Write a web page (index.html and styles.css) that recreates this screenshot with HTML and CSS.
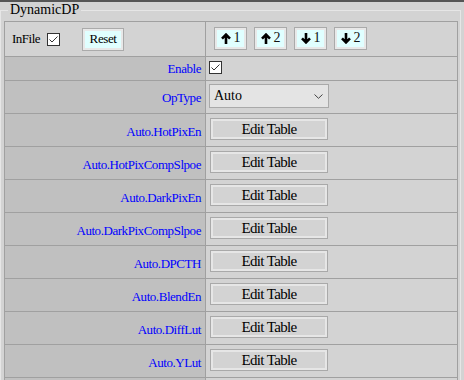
FILE: index.html
```html
<!DOCTYPE html>
<html>
<head>
<meta charset="utf-8">
<link rel="stylesheet" href="styles.css">
</head>
<body>
<fieldset class="panel">
  <legend class="panel-title">DynamicDP</legend>
  <div class="grid">
    <div class="cell head head-left">
      <span class="infile">InFile</span>
      <span class="check check-infile"><svg width="11" height="11" viewBox="0 0 11 11"><path d="M1.5 5.5 L4 8 L9.5 2.5" fill="none" stroke="#333" stroke-width="1"/></svg></span>
      <button class="cbtn reset">Reset</button>
    </div>
    <div class="cell head head-right">
      <button class="cbtn arrow"><svg width="10" height="11" viewBox="0 0 10 11"><path d="M1 5.6 L5 1.6 L9 5.6 M5 1.6 V11" fill="none" stroke="#000" stroke-width="2.6"/></svg><span class="num">1</span></button>
      <button class="cbtn arrow"><svg width="10" height="11" viewBox="0 0 10 11"><path d="M1 5.6 L5 1.6 L9 5.6 M5 1.6 V11" fill="none" stroke="#000" stroke-width="2.6"/></svg><span class="num">2</span></button>
      <button class="cbtn arrow"><svg width="10" height="11" viewBox="0 0 10 11"><path d="M1 5.4 L5 9.4 L9 5.4 M5 9.4 V0" fill="none" stroke="#000" stroke-width="2.6"/></svg><span class="num">1</span></button>
      <button class="cbtn arrow"><svg width="10" height="11" viewBox="0 0 10 11"><path d="M1 5.4 L5 9.4 L9 5.4 M5 9.4 V0" fill="none" stroke="#000" stroke-width="2.6"/></svg><span class="num">2</span></button>
    </div>

    <div class="cell label label-en">Enable</div>
    <div class="cell value value-en"><span class="check"><svg width="11" height="11" viewBox="0 0 11 11"><path d="M1.5 5.5 L4 8 L9.5 2.5" fill="none" stroke="#333" stroke-width="1"/></svg></span></div>

    <div class="cell label label-op">OpType</div>
    <div class="cell value value-op"><div class="select"><span>Auto</span><svg width="9" height="5" viewBox="0 0 9 5"><path d="M0.5 0.5 L4.5 4.3 L8.5 0.5" fill="none" stroke="#444" stroke-width="1"/></svg></div></div>

    <div class="cell label">Auto.HotPixEn</div>
    <div class="cell value"><button class="edit">Edit Table</button></div>

    <div class="cell label">Auto.HotPixCompSlpoe</div>
    <div class="cell value"><button class="edit">Edit Table</button></div>

    <div class="cell label">Auto.DarkPixEn</div>
    <div class="cell value"><button class="edit">Edit Table</button></div>

    <div class="cell label">Auto.DarkPixCompSlpoe</div>
    <div class="cell value"><button class="edit">Edit Table</button></div>

    <div class="cell label">Auto.DPCTH</div>
    <div class="cell value"><button class="edit">Edit Table</button></div>

    <div class="cell label">Auto.BlendEn</div>
    <div class="cell value"><button class="edit">Edit Table</button></div>

    <div class="cell label">Auto.DiffLut</div>
    <div class="cell value"><button class="edit">Edit Table</button></div>

    <div class="cell label">Auto.YLut</div>
    <div class="cell value"><button class="edit">Edit Table</button></div>

    <div class="cell label"></div>
    <div class="cell value"></div>
  </div>
</fieldset>
</body>
</html>
```

FILE: styles.css
```css
html {
  overflow: hidden;
}
body {
  margin: 0;
  border-top: 2px solid #555;
  background: #d3d3d3;
  font-family: "Liberation Serif", "Times New Roman", serif;
  color: #000;
}
.panel {
  margin: 0 3px 0 0;
  padding: 3px 2px 0 3px;
  border: 1px solid #e6e6e6;
  min-inline-size: 0;
}
.panel-title {
  margin-left: 4px;
  padding: 0 2px;
  font-size: 14px;
  line-height: 16px;
}
.grid {
  display: grid;
  grid-template-columns: 201px 252px;
  grid-template-rows: 35px 24px;
  grid-auto-rows: 33px;
  border-left: 1px solid #a0a0a0;
  border-top: 1px solid #a0a0a0;
}
.cell {
  box-sizing: border-box;
  border-right: 1px solid #a0a0a0;
  border-bottom: 1px solid #a0a0a0;
  display: flex;
  background: #d3d3d3;
}
.head {
  align-items: center;
}
.head-left {
  padding-left: 7px;
}
.infile {
  font-size: 13px;
  letter-spacing: -0.5px;
}
.check {
  box-sizing: border-box;
  width: 13px;
  height: 13px;
  border: 1px solid #333;
  background: #fff;
  display: block;
}
.check svg {
  display: block;
}
.check-infile {
  margin-left: 7px;
  margin-top: 1px;
}
.cbtn {
  box-sizing: border-box;
  border: 1px solid #aaa;
  box-shadow: inset 0 0 0 2px #e8e8e8;
  background: #e0ffff;
  font-family: "Liberation Serif", "Times New Roman", serif;
  padding: 0;
  margin: 0;
  display: flex;
  align-items: center;
  justify-content: center;
  color: #000;
}
.reset {
  margin-left: 22px;
  width: 42px;
  height: 23px;
  font-size: 13px;
  letter-spacing: -0.4px;
}
.head-right {
  padding-left: 8px;
  padding-bottom: 2px;
  gap: 7px;
}
.arrow {
  width: 33px;
  height: 23px;
  gap: 3px;
}
.arrow svg {
  display: block;
}
.num {
  font-size: 14px;
  line-height: 16px;
  color: #111;
}
.label {
  background: #c0c0c0;
  justify-content: flex-end;
  align-items: center;
  padding-right: 4px;
  padding-top: 4px;
  color: #0000ff;
  font-size: 13px;
  letter-spacing: -0.45px;
}
.label-en {
  padding-top: 1px;
}
.label-op {
  padding-top: 2px;
}
.value {
  align-items: flex-start;
  padding-left: 4px;
  padding-top: 4px;
}
.value-en {
  padding-left: 3px;
  padding-top: 4px;
}
.value-op {
  padding-left: 3px;
  padding-top: 3px;
}
.select {
  box-sizing: border-box;
  width: 120px;
  height: 24px;
  border: 1px solid #a9a9a9;
  background: #e4e4e4;
  display: flex;
  align-items: center;
  justify-content: space-between;
  padding: 0 5px 0 4px;
  font-size: 14px;
}
.select svg {
  display: block;
}
.edit {
  box-sizing: border-box;
  width: 118px;
  height: 22px;
  border: 1px solid #a9a9a9;
  box-shadow: inset 0 0 0 2px #e6e6e6;
  background: #d3d3d3;
  font-family: "Liberation Serif", "Times New Roman", serif;
  font-size: 15px;
  letter-spacing: -0.65px;
  color: #000;
  padding: 0;
  margin: 0;
}
```
